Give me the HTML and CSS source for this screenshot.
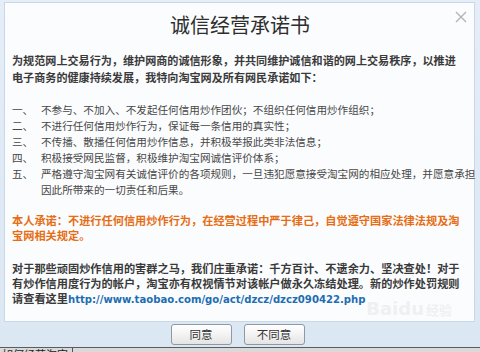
FILE: index.html
```html
<!DOCTYPE html>
<html lang="zh-CN">
<head>
<meta charset="utf-8">
<title>诚信经营承诺书</title>
<link rel="stylesheet" href="styles.css">
</head>
<body>
<div class="frame">
  <div class="panel">
    <h1 class="title">诚信经营承诺书</h1>
    <svg class="close" width="12" height="12" viewBox="0 0 12 12"><path d="M1 1 L11 11 M11 1 L1 11" stroke="#b4b4b4" stroke-width="1.4" fill="none"/></svg>
    <p class="intro">为规范网上交易行为，维护网商的诚信形象，并共同维护诚信和谐的网上交易秩序，以推进<br>电子商务的健康持续发展，我特向淘宝网及所有网民承诺如下：</p>
    <div class="list">
      <span class="num">一、</span><span>不参与、不加入、不发起任何信用炒作团伙；不组织任何信用炒作组织；</span>
      <span class="num">二、</span><span>不进行任何信用炒作行为，保证每一条信用的真实性；</span>
      <span class="num">三、</span><span>不传播、散播任何信用炒作信息，并积极举报此类非法信息；</span>
      <span class="num">四、</span><span>积极接受网民监督，积极维护淘宝网诚信评价体系；</span>
      <span class="num">五、</span><span>严格遵守淘宝网有关诚信评价的各项规则，一旦违犯愿意接受淘宝网的相应处理，并愿意承担<br>因此所带来的一切责任和后果。</span>
    </div>
    <p class="pledge">本人承诺：不进行任何信用炒作行为，在经营过程中严于律己，自觉遵守国家法律法规及淘<br>宝网相关规定。</p>
    <p class="final">对于那些顽固炒作信用的害群之马，我们庄重承诺：千方百计、不遗余力、坚决查处！对于<br>有炒作信用度行为的帐户，淘宝亦有权视情节对该帐户做永久冻结处理。新的炒作处罚规则<br>请查看这里<a class="link" href="#">http://www.taobao.com/go/act/dzcz/dzcz090422.php</a></p>
    <div class="watermark">Baidu<span>经验</span></div>
  </div>
  <div class="actions">
    <button class="btn">同意</button>
    <button class="btn">不同意</button>
  </div>
</div>
<div class="strip"><span>如何经营淘宝</span><span class="sep"></span></div>
</body>
</html>
```

FILE: styles.css
```css
html, body {
  margin: 0;
  padding: 0;
}
body {
  width: 480px;
  height: 352px;
  overflow: hidden;
  background: #dfe9f5;
  font-family: "Noto Sans CJK SC", "Noto Sans", sans-serif;
  color: #333;
}
.frame {
  height: 347px;
  box-sizing: border-box;
  padding: 2px 5px 0 4px;
  display: flex;
  flex-direction: column;
  background: linear-gradient(#e4edf8, #dce7f4);
}
.panel {
  position: relative;
  height: 320px;
  box-sizing: border-box;
  background: #fbfcfd;
  border: 1px solid #cad7e6;
  padding: 8px 6px 0 7px;
}
.title {
  margin: 0;
  font-size: 20px;
  line-height: 28px;
  font-weight: normal;
  text-align: center;
  color: #2e2e2e;
}
.close {
  position: absolute;
  top: 8px;
  right: 7px;
}
.intro {
  margin: 13px 0 0;
  font-size: 11.1px;
  line-height: 17px;
  font-weight: bold;
  color: #3a3a3a;
  white-space: nowrap;
}
.list {
  margin-top: 16px;
  display: grid;
  grid-template-columns: 29px 1fr;
  font-size: 10.6px;
  line-height: 16px;
  color: #474747;
  white-space: nowrap;
}
.pledge {
  margin: 15px 0 0;
  font-size: 11.2px;
  line-height: 15px;
  font-weight: bold;
  color: #e66d14;
  white-space: nowrap;
}
.final {
  margin: 18px 0 0;
  font-size: 11.2px;
  line-height: 15px;
  font-weight: bold;
  color: #3a3a3a;
  white-space: nowrap;
}
.link {
  font-family: "DejaVu Sans", sans-serif;
  font-size: 10.1px;
  color: #1d6db3;
  text-decoration: none;
}
.watermark {
  position: absolute;
  right: 22px;
  bottom: 2px;
  font-family: "DejaVu Sans", sans-serif;
  font-size: 18px;
  font-weight: bold;
  color: rgba(205, 210, 218, 0.3);
}
.watermark span {
  font-family: "Noto Sans CJK SC", sans-serif;
  font-size: 13px;
  margin-left: 2px;
}
.actions {
  display: flex;
  justify-content: center;
  gap: 12px;
  margin-top: 2px;
  padding-right: 4px;
}
.btn {
  width: 61px;
  height: 21px;
  padding: 0;
  border: 1px solid #8f99a5;
  border-radius: 3px;
  background: linear-gradient(#ffffff, #f3f3f3 50%, #e4e4e4);
  font-family: "Noto Sans CJK SC", sans-serif;
  font-size: 11.5px;
  line-height: 19px;
  color: #333;
}
.strip {
  height: 5px;
  box-sizing: border-box;
  border-top: 1px solid #5c5c5c;
  background: #d9d9d9;
  display: flex;
  align-items: flex-start;
  overflow: hidden;
  padding-left: 2px;
  font-size: 11px;
  line-height: 12px;
  color: #222;
}
.sep {
  width: 1px;
  height: 5px;
  background: #555;
  margin-left: 4px;
}
```
